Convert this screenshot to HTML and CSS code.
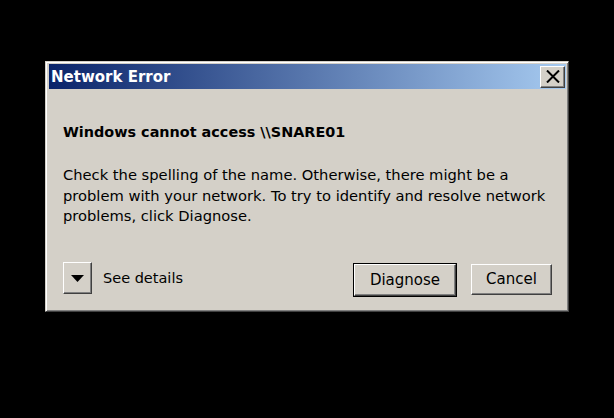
FILE: index.html
```html
<!DOCTYPE html>
<html lang="en">
  <head>
    <meta charset="UTF-8" />
    <title>Network Error</title>
    <link rel="stylesheet" href="styles.css">
  </head>
  <body>
    <!-- Dialog window -->
    <div class="dialog">
      <div class="titlebar">
        <span class="title">Network Error</span>
        <button class="close" type="button" aria-label="Close">
          <svg width="14" height="13" viewBox="0 0 14 13">
            <path d="M1 0.5 L13 12.5 M13 0.5 L1 12.5" stroke="#000" stroke-width="2" />
          </svg>
        </button>
      </div>
      <div class="content">
        <h1 class="heading">Windows cannot access \\SNARE01</h1>
        <p class="message">
          Check the spelling of the name. Otherwise, there might be a<br />
          problem with your network. To try to identify and resolve network<br />
          problems, click Diagnose.
        </p>
        <div class="actions">
          <div class="details">
            <button class="btn arrow" type="button" aria-label="See details">
              <svg width="13" height="7" viewBox="0 0 13 7">
                <path d="M0 0 H13 L6.5 7 Z" fill="#000" />
              </svg>
            </button>
            <span>See details</span>
          </div>
          <div class="buttons">
            <button class="btn default" type="button">Diagnose</button>
            <button class="btn cancel" type="button">Cancel</button>
          </div>
        </div>
      </div>
    </div>
  </body>
</html>
```

FILE: styles.css
```css
body {
  margin: 0;
  width: 614px;
  height: 418px;
  background-color: #000;
  font-family: "DejaVu Sans", Tahoma, sans-serif;
  padding-top: 61px;
  padding-left: 45px;
  box-sizing: border-box;
}
.dialog {
  width: 524px;
  height: 251px;
  box-sizing: border-box;
  background-color: #d4d0c8;
  border-top: 1px solid #d4d0c8;
  border-left: 1px solid #d4d0c8;
  border-right: 1px solid #404040;
  border-bottom: 1px solid #404040;
  box-shadow: inset 1px 1px 0 #fff, inset -1px -1px 0 #808080;
  padding: 2px 2px 3px 3px;
}
.titlebar {
  height: 25px;
  display: flex;
  align-items: center;
  justify-content: space-between;
  padding: 0 1px 0 2px;
  background: linear-gradient(to right, #0a246a, #a6caf0);
}
.title {
  color: #fff;
  font-weight: bold;
  font-size: 15px;
}
.close {
  width: 25px;
  height: 22px;
  padding: 0;
  display: flex;
  align-items: center;
  justify-content: center;
  background-color: #d4d0c8;
  border: 1px solid;
  border-color: #fff #404040 #404040 #fff;
  box-shadow: inset -1px -1px 0 #808080;
}
.content {
  padding: 35px 12px 0 14px;
}
.heading {
  margin: 0;
  font-size: 14.4px;
  font-weight: bold;
  color: #000;
}
.message {
  margin: 25px 0 0 0;
  font-size: 14.7px;
  line-height: 20.5px;
  color: #000;
  white-space: nowrap;
}
.actions {
  margin-top: 37px;
  display: flex;
  justify-content: space-between;
  align-items: center;
}
.details {
  display: flex;
  align-items: center;
  gap: 11px;
  font-size: 14.5px;
  color: #000;
  margin-top: -3px;
}
.buttons {
  display: flex;
  gap: 15px;
  padding-right: 2px;
}
.btn {
  background-color: #d4d0c8;
  border: 1px solid;
  border-color: #fff #404040 #404040 #fff;
  box-shadow: inset -1px -1px 0 #808080;
  font-family: "DejaVu Sans", Tahoma, sans-serif;
  font-size: 15px;
  color: #000;
  padding: 0;
}
.arrow {
  width: 29px;
  height: 32px;
  display: flex;
  align-items: center;
  justify-content: center;
}
.default {
  width: 102px;
  height: 32px;
  outline: 1px solid #000;
  outline-offset: 0;
}
.cancel {
  width: 81px;
  height: 31px;
}
```
